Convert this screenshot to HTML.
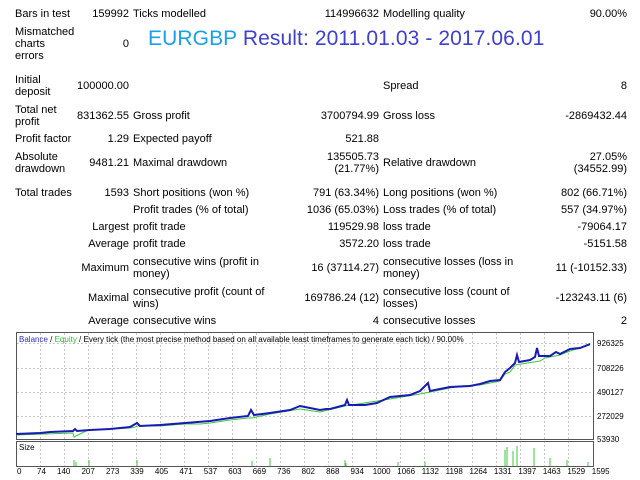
<!DOCTYPE html>
<html><head><meta charset="utf-8"><style>
body{margin:0;width:640px;height:480px;background:#fff;position:relative;overflow:hidden;font-family:"Liberation Sans","DejaVu Sans",sans-serif;font-size:11px;color:#000}
.t{position:absolute;line-height:12px;white-space:nowrap}
.r{text-align:right}
.c1{left:15px}
.v1{right:511px}
.c2{left:133px}
.v2{right:261px}
.c3{left:383px}
.v3{right:13px}
#title{position:absolute;left:148px;top:26px;font-size:21px;color:#4040d0;white-space:nowrap;line-height:25px;letter-spacing:0.1px}
#title span{color:#1aa0e8}
.ax{position:absolute;font-size:8px;color:#000;line-height:9px;white-space:nowrap}
</style></head><body>
<div class="t c1" style="top:8px">Bars in test</div><div class="t r v1" style="top:8px">159992</div>
<div class="t c2" style="top:8px">Ticks modelled</div><div class="t r v2" style="top:8px">114996632</div>
<div class="t c3" style="top:8px">Modelling quality</div><div class="t r v3" style="top:8px">90.00%</div>

<div class="t c1" style="top:26px">Mismatched<br>charts<br>errors</div><div class="t r v1" style="top:38px">0</div>
<div id="title"><span>EURGBP</span> Result: 2011.01.03 - 2017.06.01</div>

<div class="t c1" style="top:74px">Initial<br>deposit</div><div class="t r v1" style="top:80px">100000.00</div>
<div class="t c3" style="top:80px">Spread</div><div class="t r v3" style="top:80px">8</div>

<div class="t c1" style="top:104px">Total net<br>profit</div><div class="t r v1" style="top:110px">831362.55</div>
<div class="t c2" style="top:110px">Gross profit</div><div class="t r v2" style="top:110px">3700794.99</div>
<div class="t c3" style="top:110px">Gross loss</div><div class="t r v3" style="top:110px">-2869432.44</div>

<div class="t c1" style="top:133px">Profit factor</div><div class="t r v1" style="top:133px">1.29</div>
<div class="t c2" style="top:133px">Expected payoff</div><div class="t r v2" style="top:133px">521.88</div>

<div class="t c1" style="top:151px">Absolute<br>drawdown</div><div class="t r v1" style="top:157px">9481.21</div>
<div class="t c2" style="top:157px">Maximal drawdown</div><div class="t r v2" style="top:151px">135505.73<br>(21.77%)</div>
<div class="t c3" style="top:157px">Relative drawdown</div><div class="t r v3" style="top:151px">27.05%<br>(34552.99)</div>

<div class="t c1" style="top:187px">Total trades</div><div class="t r v1" style="top:187px">1593</div>
<div class="t c2" style="top:187px">Short positions (won %)</div><div class="t r v2" style="top:187px">791 (63.34%)</div>
<div class="t c3" style="top:187px">Long positions (won %)</div><div class="t r v3" style="top:187px">802 (66.71%)</div>

<div class="t c2" style="top:204px">Profit trades (% of total)</div><div class="t r v2" style="top:204px">1036 (65.03%)</div>
<div class="t c3" style="top:204px">Loss trades (% of total)</div><div class="t r v3" style="top:204px">557 (34.97%)</div>

<div class="t r v1" style="top:221px">Largest</div><div class="t c2" style="top:221px">profit trade</div><div class="t r v2" style="top:221px">119529.98</div>
<div class="t c3" style="top:221px">loss trade</div><div class="t r v3" style="top:221px">-79064.17</div>

<div class="t r v1" style="top:238px">Average</div><div class="t c2" style="top:238px">profit trade</div><div class="t r v2" style="top:238px">3572.20</div>
<div class="t c3" style="top:238px">loss trade</div><div class="t r v3" style="top:238px">-5151.58</div>

<div class="t r v1" style="top:262px">Maximum</div><div class="t c2" style="top:256px">consecutive wins (profit in<br>money)</div><div class="t r v2" style="top:262px">16 (37114.27)</div>
<div class="t c3" style="top:256px">consecutive losses (loss in<br>money)</div><div class="t r v3" style="top:262px">11 (-10152.33)</div>

<div class="t r v1" style="top:292px">Maximal</div><div class="t c2" style="top:286px">consecutive profit (count of<br>wins)</div><div class="t r v2" style="top:292px">169786.24 (12)</div>
<div class="t c3" style="top:286px">consecutive loss (count of<br>losses)</div><div class="t r v3" style="top:292px">-123243.11 (6)</div>

<div class="t r v1" style="top:315px">Average</div><div class="t c2" style="top:315px">consecutive wins</div><div class="t r v2" style="top:315px">4</div>
<div class="t c3" style="top:315px">consecutive losses</div><div class="t r v3" style="top:315px">2</div>

<svg style="position:absolute;left:0;top:0" width="640" height="480">
<g stroke="#c8c8c8" stroke-dasharray="2,2" stroke-width="1">
<line x1="17" y1="343.5" x2="594" y2="343.5"/><line x1="17" y1="368.5" x2="594" y2="368.5"/><line x1="17" y1="392.5" x2="594" y2="392.5"/><line x1="17" y1="416.5" x2="594" y2="416.5"/>
<line x1="40.5" y1="333" x2="40.5" y2="466"/><line x1="64.5" y1="333" x2="64.5" y2="466"/><line x1="88.5" y1="333" x2="88.5" y2="466"/><line x1="112.5" y1="333" x2="112.5" y2="466"/><line x1="136.5" y1="333" x2="136.5" y2="466"/><line x1="160.5" y1="333" x2="160.5" y2="466"/><line x1="184.5" y1="333" x2="184.5" y2="466"/><line x1="208.5" y1="333" x2="208.5" y2="466"/><line x1="232.5" y1="333" x2="232.5" y2="466"/><line x1="256.5" y1="333" x2="256.5" y2="466"/><line x1="280.5" y1="333" x2="280.5" y2="466"/><line x1="304.5" y1="333" x2="304.5" y2="466"/><line x1="328.5" y1="333" x2="328.5" y2="466"/><line x1="352.5" y1="333" x2="352.5" y2="466"/><line x1="376.5" y1="333" x2="376.5" y2="466"/><line x1="400.5" y1="333" x2="400.5" y2="466"/><line x1="424.5" y1="333" x2="424.5" y2="466"/><line x1="448.5" y1="333" x2="448.5" y2="466"/><line x1="472.5" y1="333" x2="472.5" y2="466"/><line x1="496.5" y1="333" x2="496.5" y2="466"/><line x1="520.5" y1="333" x2="520.5" y2="466"/><line x1="544.5" y1="333" x2="544.5" y2="466"/><line x1="568.5" y1="333" x2="568.5" y2="466"/>
</g>
<rect x="16.5" y="332.5" width="577" height="107" fill="none" stroke="#555"/>
<rect x="16.5" y="441.5" width="577" height="25" fill="none" stroke="#555"/>
<polyline fill="none" stroke="#3cc83c" stroke-width="1" points="16,435 73,433 74,437 88,430 130,428 135,427 138,426 160,426 185,424 200,424 210,423 230,420 248,418 252,418 270,414 300,409 320,412 345,406 390,399 420,394 430,392 460,386 480,385 500,381 505,374 510,372 513,368 515,365 540,361 545,358 560,355 570,351 590,345"/>
<polyline fill="none" stroke="#1a1ab4" stroke-width="2" points="16,434 40,433 50,432 73,431 75,429 77,431 90,430 110,429 130,427 137,423 140,426 160,425 185,423 210,421 230,418 248,416 251,410 254,415 270,413 290,410 300,406 305,407 320,410 326,409 330,409 345,405 347,400 349,405 365,405 377,403 390,397 410,395 420,391 428,383 430,391 450,387 470,386 480,384 490,381 500,380 505,372 510,368 515,363 517,355 519,362 530,360 535,357 537,348 539,356 550,356 556,352 560,354 570,349 580,348 590,344"/>
<g stroke="#3cc83c" stroke-width="1">
<line x1="74" y1="466" x2="74" y2="460"/><line x1="76" y1="466" x2="76" y2="462"/><line x1="89" y1="466" x2="89" y2="460"/><line x1="137" y1="466" x2="137" y2="460"/><line x1="252" y1="466" x2="252" y2="461"/><line x1="270" y1="466" x2="270" y2="458"/><line x1="345" y1="466" x2="345" y2="460"/><line x1="346" y1="466" x2="346" y2="463"/><line x1="398" y1="466" x2="398" y2="462"/><line x1="425" y1="466" x2="425" y2="462"/><line x1="505" y1="466" x2="505" y2="450"/><line x1="507" y1="466" x2="507" y2="447"/><line x1="513" y1="466" x2="513" y2="451"/><line x1="517" y1="466" x2="517" y2="446"/><line x1="534" y1="466" x2="534" y2="448"/><line x1="550" y1="466" x2="550" y2="458"/><line x1="567" y1="466" x2="567" y2="460"/><line x1="588" y1="466" x2="588" y2="462"/>
</g>
</svg>
<div class="ax" style="left:19px;top:335px"><span style="color:#3030c0">Balance</span> / <span style="color:#30c030">Equity</span> / Every tick (the most precise method based on all available least timeframes to generate each tick) / 90.00%</div>
<div class="ax" style="left:19px;top:443px">Size</div>
<div class="ax" style="left:597px;top:339px">926325</div>
<div class="ax" style="left:597px;top:364px">708226</div>
<div class="ax" style="left:597px;top:388px">490127</div>
<div class="ax" style="left:597px;top:412px">272029</div>
<div class="ax" style="left:597px;top:435px">53930</div>
<div class="ax" style="left:17px;top:467px">0&nbsp;&nbsp;&nbsp;&nbsp;&nbsp;&nbsp;&nbsp;74&nbsp;&nbsp;&nbsp;&nbsp;&nbsp;140&nbsp;&nbsp;&nbsp;&nbsp;&nbsp;207&nbsp;&nbsp;&nbsp;&nbsp;&nbsp;273&nbsp;&nbsp;&nbsp;&nbsp;&nbsp;339&nbsp;&nbsp;&nbsp;&nbsp;&nbsp;405&nbsp;&nbsp;&nbsp;&nbsp;&nbsp;471&nbsp;&nbsp;&nbsp;&nbsp;&nbsp;537&nbsp;&nbsp;&nbsp;&nbsp;&nbsp;603&nbsp;&nbsp;&nbsp;&nbsp;&nbsp;669&nbsp;&nbsp;&nbsp;&nbsp;&nbsp;736&nbsp;&nbsp;&nbsp;&nbsp;&nbsp;802&nbsp;&nbsp;&nbsp;&nbsp;&nbsp;868&nbsp;&nbsp;&nbsp;&nbsp;&nbsp;934&nbsp;&nbsp;&nbsp;&nbsp;1000&nbsp;&nbsp;&nbsp;1066&nbsp;&nbsp;&nbsp;1132&nbsp;&nbsp;&nbsp;1198&nbsp;&nbsp;&nbsp;1264&nbsp;&nbsp;&nbsp;1331&nbsp;&nbsp;&nbsp;1397&nbsp;&nbsp;&nbsp;1463&nbsp;&nbsp;&nbsp;1529&nbsp;&nbsp;&nbsp;1595</div>
</body></html>
